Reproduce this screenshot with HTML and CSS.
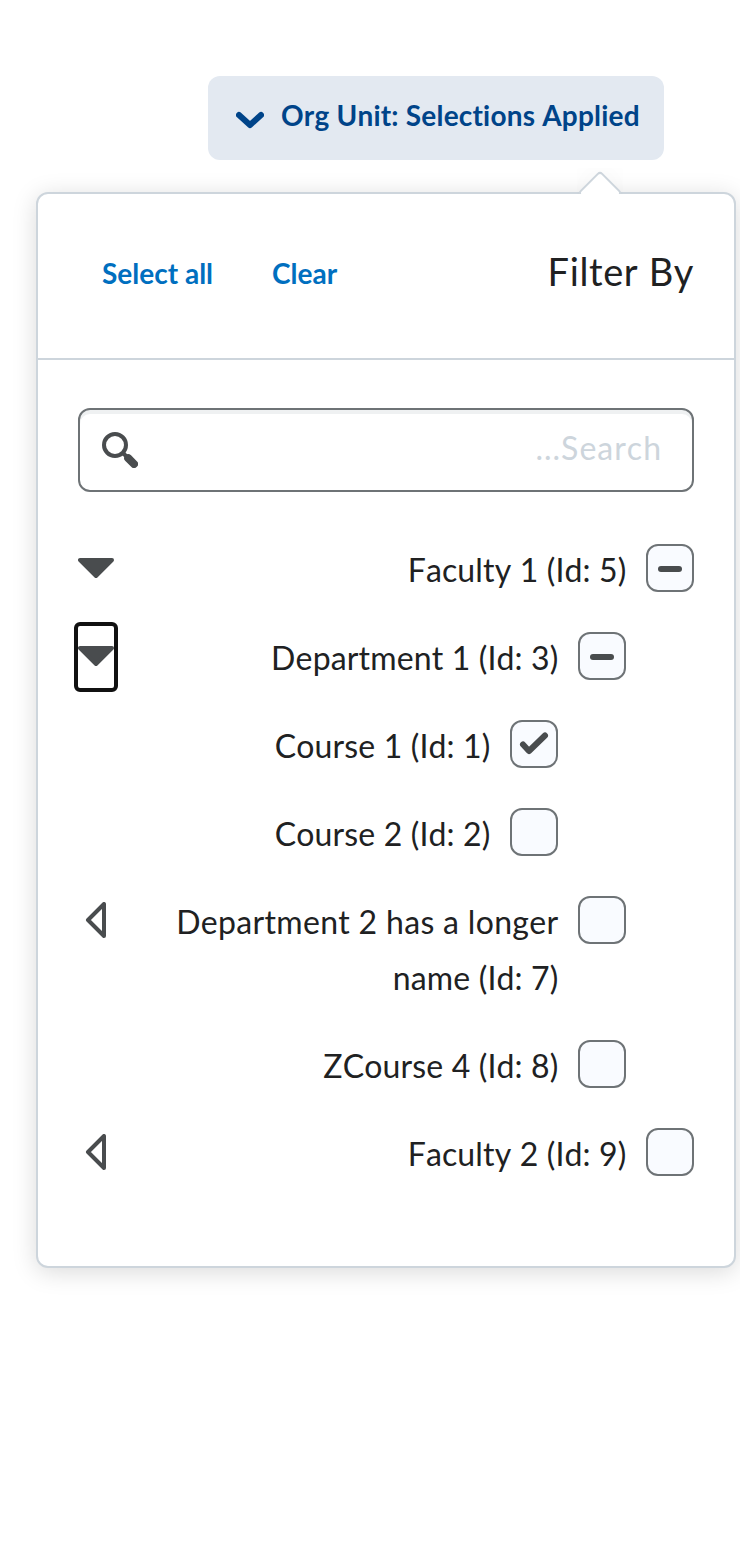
FILE: index.html
```html
<!DOCTYPE html>
<html lang="en">
<head>
<meta charset="utf-8">
<title>Org Unit Filter</title>
<link rel="stylesheet" href="styles.css">
</head>
<body>
<div class="filter">
  <button class="opener" type="button">
    <svg class="chevron" width="28" height="18" viewBox="0 0 28 18"><path d="M3 4L14 14L25 4"/></svg>
    <span>Org Unit: Selections Applied</span>
  </button>
  <section class="panel">
    <div class="pointer"><div class="pointer-tip"></div></div>
    <header class="header">
      <div class="actions"><button class="link" type="button">Select all</button><button class="link" type="button">Clear</button></div>
      <h2 class="title">Filter By</h2>
    </header>
    <div class="content">
      <div class="search">
        <svg width="36" height="36" viewBox="0 0 36 36"><circle class="lens" cx="13" cy="13" r="11"/><path class="neck" d="M21 21L26 26"/><path class="handle" d="M26.2 26.2L32 32"/></svg>
        <span class="placeholder">...Search</span>
      </div>
      <div class="tree">
        <div class="row level-1"><button class="toggle" type="button"><svg width="36" height="36" viewBox="0 0 36 36"><path class="solid" d="M2 10H34L18 26Z"/></svg></button><span class="label">Faculty 1 (Id: 5)</span><span class="box"><svg width="44" height="44" viewBox="0 0 44 44"><path class="dash" d="M13 23H31"/></svg></span></div>
        <div class="row level-2"><button class="toggle focused" type="button"><svg width="36" height="36" viewBox="0 0 36 36"><path class="solid" d="M2 10H34L18 26Z"/></svg></button><span class="label">Department 1 (Id: 3)</span><span class="box"><svg width="44" height="44" viewBox="0 0 44 44"><path class="dash" d="M13 23H31"/></svg></span></div>
        <div class="row level-3"><span class="label">Course 1 (Id: 1)</span><span class="box"><svg width="44" height="44" viewBox="0 0 44 44"><path class="check" d="M11 22.5L17 29L33 13.5"/></svg></span></div>
        <div class="row level-3"><span class="label">Course 2 (Id: 2)</span><span class="box"></span></div>
        <div class="row level-2"><button class="toggle" type="button"><svg width="36" height="36" viewBox="0 0 36 36"><path class="outline" d="M26 2V34L10 18Z"/></svg></button><span class="label"><span class="loose">Department 2 has a longer</span> name (Id: 7)</span><span class="box"></span></div>
        <div class="row level-2"><span class="label">ZCourse 4 (Id: 8)</span><span class="box"></span></div>
        <div class="row level-1"><button class="toggle" type="button"><svg width="36" height="36" viewBox="0 0 36 36"><path class="outline" d="M26 2V34L10 18Z"/></svg></button><span class="label">Faculty 2 (Id: 9)</span><span class="box"></span></div>
      </div>
    </div>
  </section>
</div>
</body>
</html>
```
FILE: styles.css
```css
* { box-sizing: border-box; }
html { overflow: hidden; }
body {
  margin: 0;
  background: #fff;
  color: #202122;
  font-family: Lato, sans-serif;
  font-size: 32px;
  font-kerning: none;
  line-height: 56px;
}
button { margin: 0; padding: 0; border: 0; background: none; font: inherit; font-kerning: none; }
svg { display: block; flex: none; fill: none; }
.filter {
  display: flex;
  flex-direction: column;
  width: 740px;
  min-height: 1552px;
  padding: 76px 4px 0 36px;
}
.opener {
  display: flex;
  align-items: center;
  align-self: flex-end;
  gap: 17px;
  width: 456px;
  height: 84px;
  margin-right: 72px;
  padding: 0 20px 6px 28px;
  border-radius: 12px;
  background: #e3e9f1;
  color: #004489;
  font-size: 28px;
  font-weight: 700;
  letter-spacing: 0.2px;
  white-space: nowrap;
}
.chevron { margin-top: 10px; stroke: #004489; stroke-width: 6; stroke-linecap: round; stroke-linejoin: round; }
.panel {
  position: relative;
  height: 1076px;
  margin-top: 32px;
  border: 2px solid #cdd5dc;
  border-radius: 12px;
  background: #fff;
  box-shadow: 0 4px 24px rgba(0, 0, 0, 0.15);
}
.pointer {
  position: absolute;
  top: -26px;
  left: 539px;
  width: 46px;
  height: 26px;
  overflow: hidden;
}
.pointer-tip {
  width: 32px;
  height: 32px;
  margin: 9px 0 0 7px;
  border: 2px solid #cdd5dc;
  border-radius: 4px;
  background: #fff;
  box-shadow: -4px -4px 24px rgba(0, 0, 0, 0.03);
  transform: rotate(45deg);
}
.header {
  display: flex;
  justify-content: space-between;
  height: 166px;
  padding: 49px 40px 0 64px;
  border-bottom: 2px solid #cdd5dc;
}
.actions { display: flex; align-items: flex-start; gap: 59px; padding-top: 2px; }
.link { color: #006fbf; font-size: 28px; font-weight: 700; }
.title { margin: 0; font-size: 38px; font-weight: 400; letter-spacing: 0.6px; }
.content { padding: 48px 40px 0; }
.search {
  display: flex;
  align-items: center;
  justify-content: space-between;
  height: 84px;
  padding: 0 30px 0 22px;
  border: 2px solid #6e7376;
  border-radius: 12px;
  box-shadow: inset 0 4px 0 rgba(177, 185, 190, 0.2);
}
.placeholder { color: #cdd5dc; letter-spacing: 1px; padding-bottom: 4px; }
.lens { stroke: #494c4e; stroke-width: 4; }
.neck { stroke: #494c4e; stroke-width: 4; }
.handle { stroke: #494c4e; stroke-width: 8; stroke-linecap: round; }
.tree { display: flex; flex-direction: column; gap: 32px; padding-top: 50px; }
.row { display: flex; align-items: flex-start; gap: 19.5px; }
.level-2 { padding-right: 68px; }
.level-3 { padding-right: 136px; }
.toggle { display: flex; align-items: center; justify-content: center; width: 36px; height: 62px; margin: -4px 0 -2px; border-radius: 2px; }
.toggle svg { margin-top: -2px; }
.focused { outline: 4px solid #111; }
.label { flex: 1; padding-left: 20px; text-align: right; letter-spacing: 0.15px; }
.loose { letter-spacing: 0.32px; }
.box {
  flex: none;
  width: 48px;
  height: 48px;
  margin-top: 2px;
  border: 2px solid #6e7376;
  border-radius: 12px;
  background: #f9fbff;
}
.solid, .outline { stroke: #494c4e; stroke-width: 4; stroke-linejoin: round; }
.solid { fill: #494c4e; }
.dash, .check { stroke: #494c4e; stroke-width: 6; stroke-linecap: round; stroke-linejoin: round; }
```
